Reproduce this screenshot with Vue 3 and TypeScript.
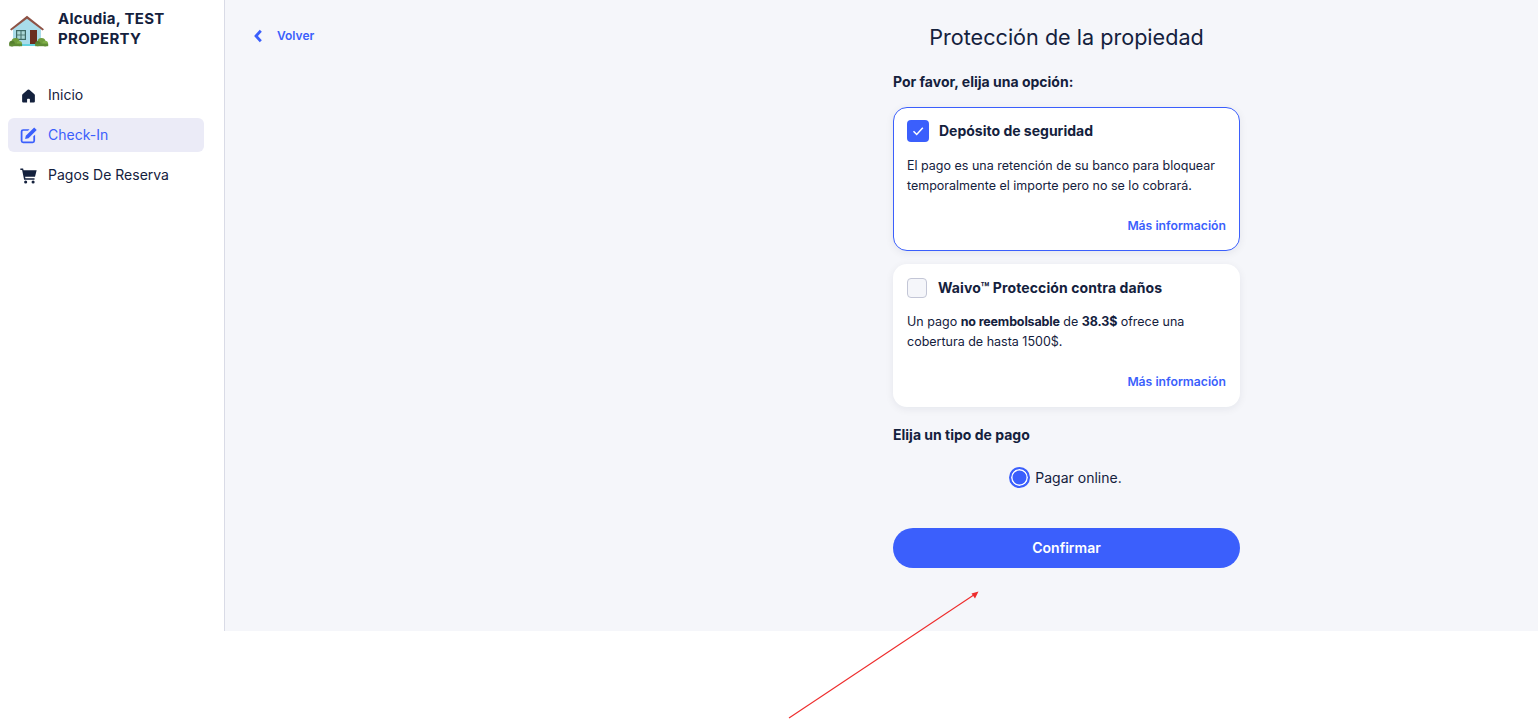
<template>
  <div class="page">
    <div class="shell">
      <aside class="sidebar">
        <div class="brand">
          <svg class="house" viewBox="0 0 40 32" width="40" height="32">
            <path d="M4 14 L18 3 L32 14 V29 H4 Z" fill="#a9dcea" />
            <path d="M1 14.2 L18 0.8 L35 14.2 L33.6 15.6 L18 3.8 L2.4 15.6 Z" fill="#8d5245" />
            <rect x="7" y="15" width="10" height="10" fill="#3f6a66" />
            <rect x="8.2" y="16.2" width="3.3" height="3.4" fill="#a9d6d4" />
            <rect x="12.5" y="16.2" width="3.3" height="3.4" fill="#a9d6d4" />
            <rect x="8.2" y="20.4" width="3.3" height="3.4" fill="#a9d6d4" />
            <rect x="12.5" y="20.4" width="3.3" height="3.4" fill="#a9d6d4" />
            <rect x="21" y="15" width="7" height="14" fill="#6b2e20" />
            <rect x="12" y="29" width="15" height="2" fill="#63d2e0" />
            <circle cx="6.5" cy="27" r="4" fill="#6f9c3d" />
            <circle cx="3" cy="28.6" r="2.8" fill="#557f2f" />
            <circle cx="10.4" cy="28.6" r="2.6" fill="#7fae47" />
            <circle cx="32.5" cy="27" r="4" fill="#6f9c3d" />
            <circle cx="28.8" cy="28.6" r="2.6" fill="#557f2f" />
            <circle cx="36.2" cy="28.6" r="2.8" fill="#7fae47" />
            <rect x="0.3" y="28.6" width="12.8" height="2.6" fill="#5f8c35" />
            <rect x="26.2" y="28.6" width="13" height="2.6" fill="#5f8c35" />
          </svg>
          <div class="brand-name">Alcudia, TEST PROPERTY</div>
        </div>
        <nav class="nav">
          <a v-for="item in navItems" :key="item.label" class="nav-item" :class="{ active: item.active }">
            <svg class="nav-icon" viewBox="0 0 24 24" width="17" height="17"><path :d="item.icon" :fill="item.fill" fill-rule="evenodd" /></svg>
            <span class="nav-label">{{ item.label }}</span>
          </a>
        </nav>
      </aside>

      <main class="content">
        <a class="back">
          <svg viewBox="0 0 10 14" width="10" height="14"><path d="M7.8 1.8 L3 7 L7.8 12.2" fill="none" stroke="#3b5ffc" stroke-width="2.8" /></svg>
          <span>Volver</span>
        </a>

        <section class="column">
          <h1>Protección de la propiedad</h1>
          <h2 class="prompt">Por favor, elija una opción:</h2>

          <div class="card selected">
            <div class="card-head">
              <span class="check on">
                <svg viewBox="0 0 22 22" width="22" height="22"><path d="M6.5 11.3 L9.7 14.5 L15.8 7.8" fill="none" stroke="#fff" stroke-width="1.5" /></svg>
              </span>
              <span class="card-title">Depósito de seguridad</span>
            </div>
            <p>El pago es una retención de su banco para bloquear temporalmente el importe pero no se lo cobrará.</p>
            <a class="more">Más información</a>
          </div>

          <div class="card">
            <div class="card-head">
              <span class="check"></span>
              <span class="card-title">Waivo™ Protección contra daños</span>
            </div>
            <p>Un pago <b>no reembolsable</b> de <b>38.3$</b> ofrece una cobertura de hasta 1500$.</p>
            <a class="more">Más información</a>
          </div>

          <h2 class="pay-title">Elija un tipo de pago</h2>
          <div class="radio-row">
            <span class="radio"></span>
            <span>Pagar online.</span>
          </div>
          <button class="confirm">Confirmar</button>
        </section>
      </main>
    </div>

    <svg class="annotation" viewBox="0 0 1538 719" width="1538" height="719">
      <path d="M789 718 L976 593.5" stroke="#ee2c2c" stroke-width="1.1" fill="none" />
      <path d="M978.5 591.5 L971.5 593.5 L975 598.5 Z" fill="#ee2c2c" />
    </svg>
  </div>
</template>

<script setup lang="ts">
interface NavItem {
  label: string
  icon: string
  fill: string
  active?: boolean
}

const navItems: NavItem[] = [
  {
    label: 'Inicio',
    fill: '#14213d',
    icon: 'M10.8 4 a1.8 1.8 0 0 1 2.4 0 L20.4 10.4 a1.8 1.8 0 0 1 0.6 1.4 V20.5 a1.5 1.5 0 0 1 -1.5 1.5 H4.5 A1.5 1.5 0 0 1 3 20.5 V11.8 a1.8 1.8 0 0 1 0.6 -1.4 Z M10 22 V17.5 a1 1 0 0 1 1 -1 h2 a1 1 0 0 1 1 1 V22 Z',
  },
  {
    label: 'Check-In',
    fill: '#3b5ffc',
    active: true,
    icon: 'M4.5 3 H13.5 L11.3 5.4 H4.8 A1.3 1.3 0 0 0 3.5 6.7 V19.3 A1.3 1.3 0 0 0 4.8 20.6 H17.5 A1.3 1.3 0 0 0 18.8 19.3 V13.2 L21.3 10.8 V19.5 A3.5 3.5 0 0 1 17.8 23 H4.5 A3.5 3.5 0 0 1 1 19.5 V6.5 A3.5 3.5 0 0 1 4.5 3 Z M20 0.6 L23.6 4.2 L12 16 L7.2 17 L8.2 12.2 Z',
  },
  {
    label: 'Pagos De Reserva',
    fill: '#14213d',
    icon: 'M0.5 2 H4.4 L5 4.5 H23.5 L21.2 13.8 H7.2 L7.6 15.8 H20.5 V18 H5.8 L3 4.2 H0.5 Z M8 19 a2.2 2.2 0 1 1 0 4.4 a2.2 2.2 0 0 1 0 -4.4 Z M18.5 19 a2.2 2.2 0 1 1 0 4.4 a2.2 2.2 0 0 1 0 -4.4 Z',
  },
]
</script>

<style>
html,
body {
  margin: 0;
  background: #fff;
}
</style>

<style scoped>
.page {
  position: relative;
  width: 1538px;
  height: 719px;
  overflow: hidden;
  background: #fff;
  color: #14213d;
  font-family: Inter, "Noto Sans", sans-serif;
}

.shell {
  display: flex;
  height: 631px;
}

.sidebar {
  flex-shrink: 0;
  box-sizing: border-box;
  width: 225px;
  border-right: 1px solid #d9dbe6;
  background: #fff;
}

.brand {
  display: flex;
  align-items: flex-start;
  gap: 9px;
  padding: 9px 0 0 9px;
}

.house {
  margin-top: 6px;
}

.brand-name {
  width: 125px;
  font-size: 15px;
  line-height: 20px;
  font-weight: 700;
  letter-spacing: 0.3px;
}

.nav {
  display: flex;
  flex-direction: column;
  gap: 6px;
  margin: 29px 20px 0 8px;
}

.nav-item {
  display: flex;
  align-items: center;
  gap: 11px;
  height: 34px;
  padding-left: 12px;
  border-radius: 6px;
  font-size: 14px;
}

.nav-label {
  padding-bottom: 2px;
}

.nav-item.active {
  background: #ebebf7;
  color: #3b5ffc;
}

.content {
  flex: 1;
  display: flex;
  align-items: flex-start;
  background: #f5f6fa;
}

.back {
  display: flex;
  align-items: center;
  gap: 14px;
  width: 640px;
  margin: 29px 0 0 28px;
  color: #3b5ffc;
  font-size: 12px;
  font-weight: 600;
  line-height: 14px;
}

.column {
  width: 347px;
}

h1 {
  margin: 24px 0 0;
  font-size: 21.6px;
  line-height: 26px;
  font-weight: 400;
  text-align: center;
}

.prompt {
  margin: 22px 0 0;
  font-size: 14px;
  line-height: 20px;
  font-weight: 700;
}

.card {
  box-sizing: border-box;
  height: 143px;
  margin-top: 13px;
  padding: 13px 13px 0;
  border: 1px solid transparent;
  border-radius: 14px;
  background: #fff;
  box-shadow: 0 2px 8px rgba(20, 33, 61, 0.07);
}

.card.selected {
  height: 144px;
  margin-top: 15px;
  padding-top: 12px;
  border-color: #3b5ffc;
}

.card-head {
  display: flex;
  align-items: center;
  gap: 11px;
  height: 20px;
}

.selected .card-head {
  gap: 10px;
  height: 22px;
}

.check {
  box-sizing: border-box;
  width: 20px;
  height: 20px;
  border: 1px solid #c3c6d6;
  border-radius: 4px;
  background: #f5f6fa;
}

.check.on {
  width: 22px;
  height: 22px;
  border: 0;
  background: #3b5ffc;
}

.card-title {
  padding-bottom: 2px;
  font-size: 14px;
  font-weight: 700;
  letter-spacing: 0.1px;
}

.selected .card-title {
  letter-spacing: 0;
}

.card p {
  margin: 14px 0 0;
  font-size: 12.5px;
  line-height: 20px;
}

.card p b {
  font-weight: 700;
  letter-spacing: -0.15px;
}

.more {
  display: block;
  margin-top: 20px;
  color: #3b5ffc;
  font-size: 12.2px;
  line-height: 20px;
  font-weight: 600;
  text-align: right;
}

.pay-title {
  margin: 18px 0 0;
  font-size: 14px;
  line-height: 20px;
  font-weight: 700;
}

.radio-row {
  display: flex;
  align-items: center;
  justify-content: center;
  gap: 5px;
  margin-top: 22px;
  padding-right: 2px;
  font-size: 14px;
  line-height: 20px;
}

.radio {
  box-sizing: border-box;
  width: 21px;
  height: 21px;
  border: 2px solid #3b5ffc;
  border-radius: 50%;
  background: #3b5ffc;
  box-shadow: inset 0 0 0 1.5px #fff;
}

.confirm {
  display: block;
  width: 100%;
  height: 40px;
  margin-top: 40px;
  padding: 0 0 2px;
  border: 0;
  border-radius: 20px;
  background: #3b5ffc;
  color: #fff;
  font-family: inherit;
  font-size: 14px;
  font-weight: 600;
}

.annotation {
  position: absolute;
  left: 0;
  top: 0;
  pointer-events: none;
}
</style>
